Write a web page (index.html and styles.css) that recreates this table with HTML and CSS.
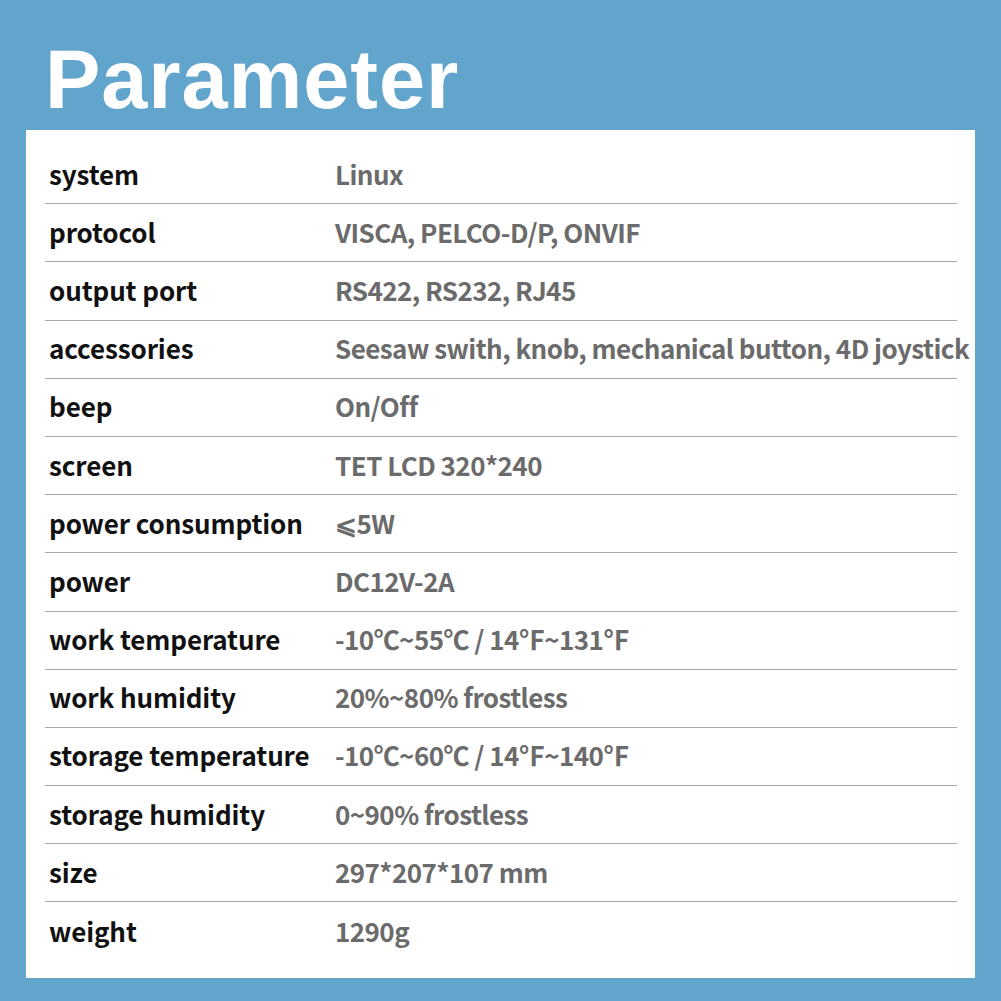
FILE: index.html
```html
<!DOCTYPE html>
<html>
<head>
<meta charset="utf-8">
<link rel="stylesheet" href="styles.css">
</head>
<body>
<div class="page">
  <header class="header"><h1 class="title">Parameter</h1></header>
  <section class="card">
    <div class="row"><span class="label">system</span><span class="value">Linux</span></div>
    <div class="row"><span class="label">protocol</span><span class="value">VISCA, PELCO-D/P, ONVIF</span></div>
    <div class="row"><span class="label">output port</span><span class="value">RS422, RS232, RJ45</span></div>
    <div class="row"><span class="label">accessories</span><span class="value">Seesaw swith, knob, mechanical button, 4D joystick</span></div>
    <div class="row"><span class="label">beep</span><span class="value">On/Off</span></div>
    <div class="row"><span class="label">screen</span><span class="value">TET LCD 320*240</span></div>
    <div class="row"><span class="label">power consumption</span><span class="value">⩽5W</span></div>
    <div class="row"><span class="label">power</span><span class="value">DC12V-2A</span></div>
    <div class="row"><span class="label">work temperature</span><span class="value">-10℃~55℃ / 14℉~131℉</span></div>
    <div class="row"><span class="label">work humidity</span><span class="value">20%~80% frostless</span></div>
    <div class="row"><span class="label">storage temperature</span><span class="value">-10℃~60℃ / 14℉~140℉</span></div>
    <div class="row"><span class="label">storage humidity</span><span class="value">0~90% frostless</span></div>
    <div class="row"><span class="label">size</span><span class="value">297*207*107 mm</span></div>
    <div class="row row-last"><span class="label">weight</span><span class="value">1290g</span></div>
  </section>
</div>
</body>
</html>
```

FILE: styles.css
```css
html, body {
  margin: 0;
  padding: 0;
  background: #62a5cc;
}
.page {
  width: 1001px;
  height: 1001px;
  background: #62a5cc;
  overflow: hidden;
}
.header {
  height: 130px;
  box-sizing: border-box;
  padding: 38px 0 0 45px;
}
.title {
  margin: 0;
  font-family: "Liberation Sans", Arial, sans-serif;
  font-weight: 700;
  font-size: 83px;
  line-height: 1;
  letter-spacing: 0.9px;
  color: #ffffff;
}
.card {
  margin-left: 26px;
  width: 949px;
  height: 848px;
  box-sizing: border-box;
  background: #ffffff;
  padding: 16px 18px 0 19px;
  display: flex;
  flex-direction: column;
}
.row {
  display: grid;
  grid-template-columns: 290px 1fr;
  align-items: center;
  height: 58.2px;
  flex: none;
  box-sizing: border-box;
  border-bottom: 1px solid #a9a9a9;
  padding-bottom: 3px;
  font-family: "Noto Sans CJK SC", "Noto Sans", sans-serif;
  font-weight: 700;
  font-size: 26px;
  white-space: nowrap;
}
.row-last {
  border-bottom: none;
}
.label {
  color: #111111;
  padding-left: 4px;
  letter-spacing: -0.1px;
}
.value {
  color: #6b6b6b;
  letter-spacing: -0.55px;
}
```
